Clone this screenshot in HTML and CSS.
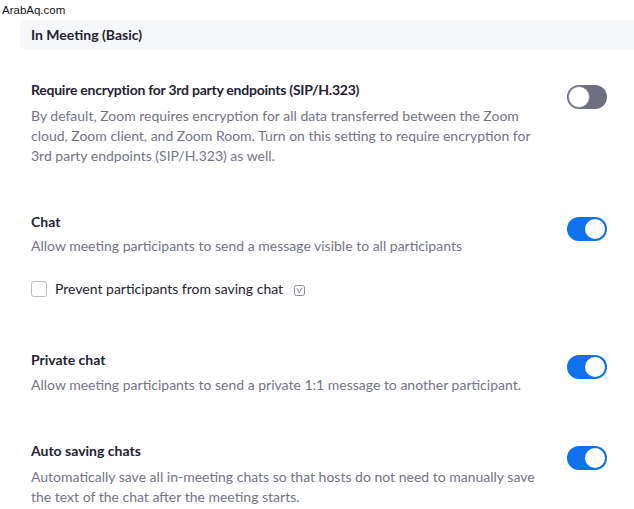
FILE: index.html
```html
<!DOCTYPE html>
<html>
<head>
    <link rel="stylesheet" href="styles.css">
</head>
<body>
    <div class="watermark">ArabAq.com</div>

    <div class="group-header">In Meeting (Basic)</div>

    <div class="setting first">
        <div class="setting-text">
            <div class="setting-title tight">Require encryption for 3rd party endpoints (SIP/H.323)</div>
            <div class="setting-desc">By default, Zoom requires encryption for all data transferred between the Zoom cloud, Zoom client, and Zoom Room. Turn on this setting to require encryption for 3rd party endpoints (SIP/H.323) as well.</div>
        </div>
        <div class="toggle"></div>
    </div>

    <div class="setting chat">
        <div class="setting-text">
            <div class="setting-title">Chat</div>
            <div class="setting-desc">Allow meeting participants to send a message visible to all participants</div>
            <label class="check-row">
                <span class="checkbox"></span>
                <span class="check-label">Prevent participants from saving chat</span>
                <svg class="info-icon" width="11" height="11" viewBox="0 0 11 11">
                    <rect x="0.5" y="0.5" width="10" height="10" rx="2" fill="none" stroke="#8a8a99" stroke-width="1"/>
                    <path d="M3 3.2 L5.2 8 L7.6 3.2" fill="none" stroke="#8a8a99" stroke-width="1"/>
                    <path d="M7 3.2 H8.3" fill="none" stroke="#8a8a99" stroke-width="1"/>
                </svg>
            </label>
        </div>
        <div class="toggle on"></div>
    </div>

    <div class="setting private">
        <div class="setting-text">
            <div class="setting-title">Private chat</div>
            <div class="setting-desc">Allow meeting participants to send a private 1:1 message to another participant.</div>
        </div>
        <div class="toggle on"></div>
    </div>

    <div class="setting">
        <div class="setting-text">
            <div class="setting-title">Auto saving chats</div>
            <div class="setting-desc">Automatically save all in-meeting chats so that hosts do not need to manually save the text of the chat after the meeting starts.</div>
        </div>
        <div class="toggle on"></div>
    </div>
</body>
</html>
```

FILE: styles.css
```css
body {
    margin: 0;
    background: #ffffff;
    font-family: Lato, "Open Sans", sans-serif;
    font-size: 14px;
    line-height: 20px;
    color: #232333;
    position: relative;
}

.watermark {
    position: absolute;
    top: 3px;
    left: 2px;
    font-family: "Liberation Sans", Arial, sans-serif;
    font-size: 11.5px;
    line-height: 14px;
    color: #111111;
}

.group-header {
    margin: 20px 0 0 20px;
    height: 30px;
    line-height: 30px;
    padding-left: 11px;
    background: #f6f7f9;
    border-radius: 6px 0 0 6px;
    font-weight: bold;
}

.setting {
    display: flex;
    justify-content: space-between;
    align-items: flex-start;
    padding-left: 31px;
    padding-right: 27px;
    margin-top: 46px;
}

.setting.first {
    margin-top: 30px;
}

.setting.private {
    margin-top: 53px;
}

.setting-text {
    width: 506px;
}

.setting-title {
    font-weight: bold;
    margin-bottom: 6px;
}

.setting-title.tight {
    letter-spacing: -0.25px;
}

.chat .setting-title {
    margin-bottom: 4px;
}

.private .setting-title {
    margin-bottom: 5px;
}

.setting-desc {
    color: #747487;
}

.check-row {
    display: flex;
    align-items: center;
    margin-top: 25px;
    height: 16px;
}

.checkbox {
    width: 14px;
    height: 14px;
    border: 1px solid #bdbdc6;
    border-radius: 3px;
    margin-right: 8px;
}

.check-label {
    color: #232333;
}

.info-icon {
    margin-left: 11px;
    margin-top: 2px;
}

.toggle {
    position: relative;
    flex: none;
    width: 40px;
    height: 24px;
    margin-top: 5px;
    border-radius: 12px;
    background: #6e7082;
}

.toggle::after {
    content: "";
    position: absolute;
    top: 1px;
    left: 1px;
    width: 20px;
    height: 20px;
    border-radius: 50%;
    background: #ffffff;
    border: 1px solid #8d8e9c;
}

.toggle.on {
    background: #0e72ed;
}

.toggle.on::after {
    left: auto;
    right: 2px;
    top: 2px;
    width: 20px;
    height: 20px;
    border: none;
}
```
